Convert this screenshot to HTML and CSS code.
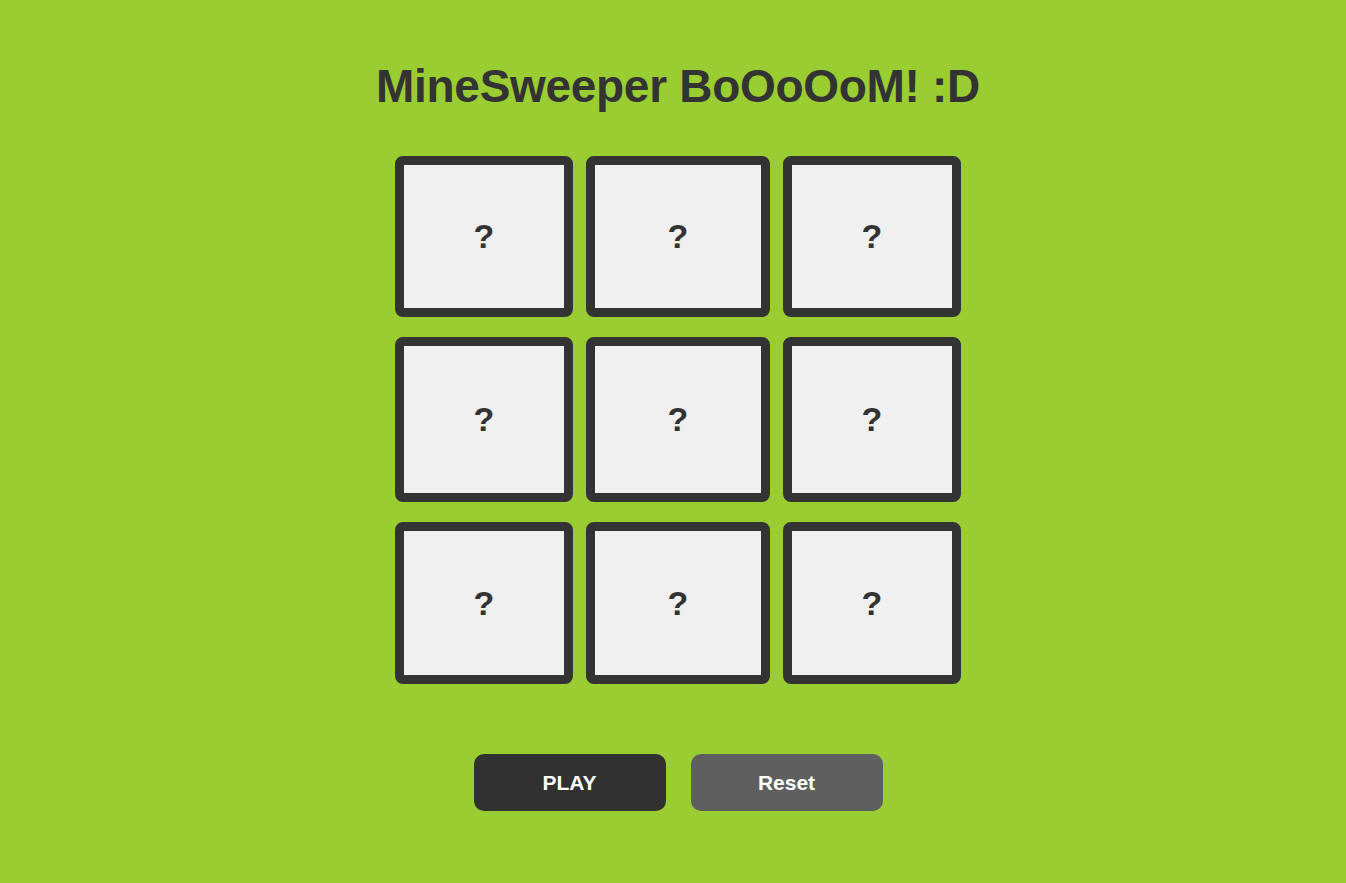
FILE: index.html
```html
<!DOCTYPE html>
<html>
<head>
<meta charset="utf-8">
<link rel="stylesheet" href="styles.css">
</head>
<body>
<main class="page">
  <h1 class="title">MineSweeper BoOoOoM! :D</h1>
  <div class="board">
    <div class="cell">?</div>
    <div class="cell">?</div>
    <div class="cell">?</div>
    <div class="cell">?</div>
    <div class="cell">?</div>
    <div class="cell">?</div>
    <div class="cell">?</div>
    <div class="cell">?</div>
    <div class="cell">?</div>
  </div>
  <div class="controls">
    <button class="btn btn-play">PLAY</button>
    <button class="btn btn-reset">Reset</button>
  </div>
</main>
</body>
</html>
```

FILE: styles.css
```css
html, body {
  margin: 0;
  padding: 0;
  background: #9acd32;
  height: 100%;
}
.page {
  padding-left: 10px;
  display: flex;
  flex-direction: column;
  align-items: center;
  font-family: "Liberation Sans", Arial, sans-serif;
  color: #333;
}
.title {
  margin: 58px 0 0 0;
  font-size: 46px;
  line-height: 56px;
  font-weight: bold;
  letter-spacing: -0.3px;
}
.board {
  margin-top: 42px;
  display: grid;
  grid-template-columns: 178px 184px 178px;
  grid-template-rows: 161px 165px 162px;
  column-gap: 13px;
  row-gap: 20px;
}
.cell {
  box-sizing: border-box;
  border: 9px solid #333;
  border-radius: 8px;
  background: #f0f0f0;
  display: flex;
  align-items: center;
  justify-content: center;
  font-size: 34px;
  font-weight: bold;
  color: #333;
}
.controls {
  margin-top: 70px;
  display: flex;
  gap: 25px;
}
.btn {
  width: 192px;
  height: 57px;
  border: none;
  border-radius: 10px;
  color: #fff;
  font-family: "Liberation Sans", Arial, sans-serif;
  font-size: 21px;
  font-weight: bold;
  padding: 0;
}
.btn-play {
  background: #313131;
}
.btn-reset {
  background: #5f5f5f;
}
```
